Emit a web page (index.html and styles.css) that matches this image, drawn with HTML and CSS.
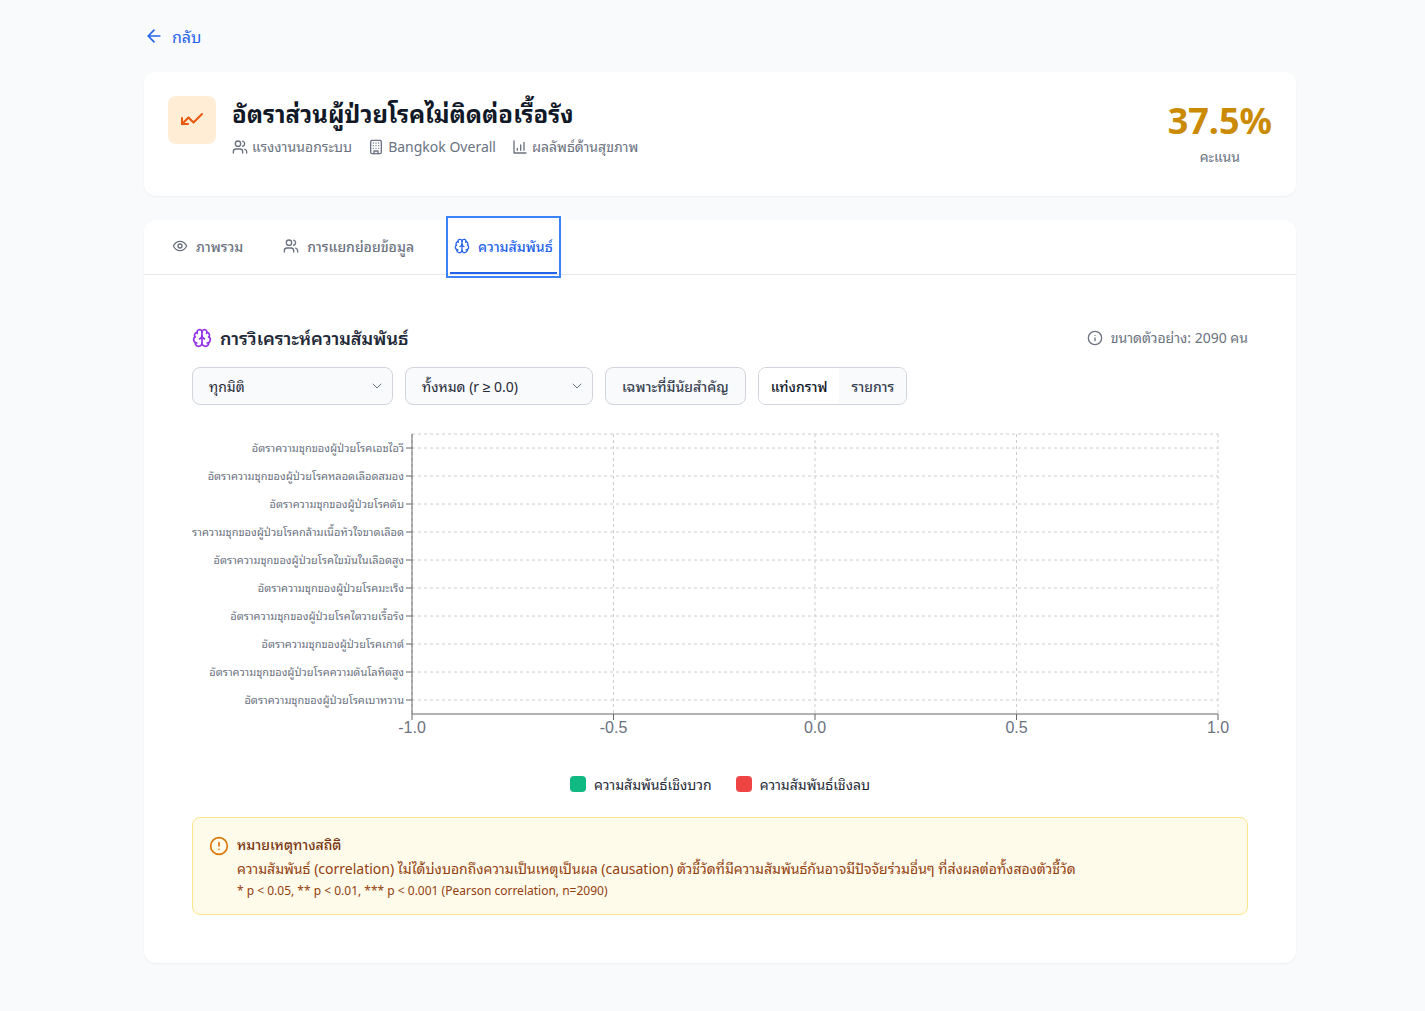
FILE: index.html
```html
<!DOCTYPE html>
<html lang="th">
<head>
<meta charset="utf-8">
<title>อัตราส่วนผู้ป่วยโรคไม่ติดต่อเรื้อรัง</title>
<link rel="stylesheet" href="styles.css">
</head>
<body>
<main class="page">
  <a class="back" href="#">
    <svg class="ic20" viewBox="0 0 24 24"><path d="M19 12H5M12 19l-7-7 7-7"/></svg>
    <span>กลับ</span>
  </a>

  <section class="card head">
    <div class="head-left">
      <div class="head-icon">
        <svg viewBox="0 0 24 24"><path d="M22 6l-8.5 8.5-5-5L2 16"/><path d="M2 10v6h6"/></svg>
      </div>
      <div>
        <h1>อัตราส่วนผู้ป่วยโรคไม่ติดต่อเรื้อรัง</h1>
        <div class="meta">
          <span class="meta-item"><svg class="ic16" viewBox="0 0 24 24"><path d="M16 21v-2a4 4 0 0 0-4-4H6a4 4 0 0 0-4 4v2"/><circle cx="9" cy="7" r="4"/><path d="M22 21v-2a4 4 0 0 0-3-3.87M16 3.13a4 4 0 0 1 0 7.75"/></svg>แรงงานนอกระบบ</span>
          <span class="meta-item"><svg class="ic16" viewBox="0 0 24 24"><rect x="4" y="2" width="16" height="20" rx="2"/><path d="M9 22v-4h6v4M8 6h.01M16 6h.01M12 6h.01M12 10h.01M12 14h.01M16 10h.01M16 14h.01M8 10h.01M8 14h.01"/></svg>Bangkok Overall</span>
          <span class="meta-item"><svg class="ic16" viewBox="0 0 24 24"><path d="M3 3v18h18M13 17V9M18 17V5M8 17v-3"/></svg>ผลลัพธ์ด้านสุขภาพ</span>
        </div>
      </div>
    </div>
    <div class="score">
      <div class="score-num">37.5%</div>
      <div class="score-label">คะแนน</div>
    </div>
  </section>

  <section class="card main">
    <nav class="tabs">
      <a class="tab" href="#"><svg class="ic16" viewBox="0 0 24 24"><path d="M2 12s3.6-7 10-7 10 7 10 7-3.6 7-10 7-10-7-10-7z"/><circle cx="12" cy="12" r="3"/></svg>ภาพรวม</a>
      <a class="tab" href="#"><svg class="ic16" viewBox="0 0 24 24"><path d="M16 21v-2a4 4 0 0 0-4-4H6a4 4 0 0 0-4 4v2"/><circle cx="9" cy="7" r="4"/><path d="M22 21v-2a4 4 0 0 0-3-3.87M16 3.13a4 4 0 0 1 0 7.75"/></svg>การแยกย่อยข้อมูล</a>
      <a class="tab active" href="#"><svg class="ic16" viewBox="0 0 24 24"><use href="#brain"/></svg>ความสัมพันธ์</a>
    </nav>

    <div class="panel">
      <div class="panel-head">
        <h2><svg class="ic20 purple" viewBox="0 0 24 24"><use href="#brain"/></svg>การวิเคราะห์ความสัมพันธ์</h2>
        <div class="sample"><svg class="ic16" viewBox="0 0 24 24"><circle cx="12" cy="12" r="10"/><path d="M12 16v-4M12 8h.01"/></svg>ขนาดตัวอย่าง: 2090 คน</div>
      </div>

      <div class="filters">
        <div class="select w-dim">ทุกมิติ<svg class="chev" viewBox="0 0 24 24"><path d="M6 9l6 6 6-6"/></svg></div>
        <div class="select w-r">ทั้งหมด (r ≥ 0.0)<svg class="chev" viewBox="0 0 24 24"><path d="M6 9l6 6 6-6"/></svg></div>
        <button class="btn">เฉพาะที่มีนัยสำคัญ</button>
        <div class="toggle"><span class="on">แท่งกราฟ</span><span class="off">รายการ</span></div>
      </div>

      <svg class="chart" width="1056" height="330" viewBox="192 424 1056 330">
        <g class="grid">
          <path d="M412 434H1218M412 448H1218M412 476H1218M412 504H1218M412 532H1218M412 560H1218M412 588H1218M412 616H1218M412 644H1218M412 672H1218M412 700H1218"/>
          <path d="M412 434V714M613.5 434V714M815 434V714M1016.5 434V714M1218 434V714"/>
        </g>
        <g class="axis">
          <path d="M412 434V714M412 714H1218"/>
          <path d="M406 448H412M406 476H412M406 504H412M406 532H412M406 560H412M406 588H412M406 616H412M406 644H412M406 672H412M406 700H412"/>
          <path d="M412 714V720M613.5 714V720M815 714V720M1016.5 714V720M1218 714V720"/>
        </g>
        <g class="ylab">
          <text x="404" y="452">อัตราความชุกของผู้ป่วยโรคเอชไอวี</text>
          <text x="404" y="480">อัตราความชุกของผู้ป่วยโรคหลอดเลือดสมอง</text>
          <text x="404" y="508">อัตราความชุกของผู้ป่วยโรคตับ</text>
          <text x="404" y="536">อัตราความชุกของผู้ป่วยโรคกล้ามเนื้อหัวใจขาดเลือด</text>
          <text x="404" y="564">อัตราความชุกของผู้ป่วยโรคไขมันในเลือดสูง</text>
          <text x="404" y="592">อัตราความชุกของผู้ป่วยโรคมะเร็ง</text>
          <text x="404" y="620">อัตราความชุกของผู้ป่วยโรคไตวายเรื้อรัง</text>
          <text x="404" y="648">อัตราความชุกของผู้ป่วยโรคเกาต์</text>
          <text x="404" y="676">อัตราความชุกของผู้ป่วยโรคความดันโลหิตสูง</text>
          <text x="404" y="704">อัตราความชุกของผู้ป่วยโรคเบาหวาน</text>
        </g>
        <g class="xlab">
          <text x="412" y="733">-1.0</text>
          <text x="613.5" y="733">-0.5</text>
          <text x="815" y="733">0.0</text>
          <text x="1016.5" y="733">0.5</text>
          <text x="1218" y="733">1.0</text>
        </g>
      </svg>

      <div class="legend">
        <span class="leg"><i class="sw green"></i>ความสัมพันธ์เชิงบวก</span>
        <span class="leg"><i class="sw red"></i>ความสัมพันธ์เชิงลบ</span>
      </div>

      <div class="note">
        <svg class="note-ic" viewBox="0 0 24 24"><circle cx="12" cy="12" r="10"/><path d="M12 8v4M12 16h.01"/></svg>
        <div>
          <div class="note-title">หมายเหตุทางสถิติ</div>
          <div class="note-body">ความสัมพันธ์ (correlation) ไม่ได้บ่งบอกถึงความเป็นเหตุเป็นผล (causation) ตัวชี้วัดที่มีความสัมพันธ์กันอาจมีปัจจัยร่วมอื่นๆ ที่ส่งผลต่อทั้งสองตัวชี้วัด</div>
          <div class="note-foot">* p &lt; 0.05, ** p &lt; 0.01, *** p &lt; 0.001 (Pearson correlation, n=2090)</div>
        </div>
      </div>
    </div>
  </section>
</main>

<svg class="defs" width="0" height="0">
  <symbol id="brain" viewBox="0 0 24 24">
    <path d="M12 18V5"/>
    <path d="M15 13a4.17 4.17 0 0 1-3-4 4.17 4.17 0 0 1-3 4"/>
    <path d="M17.598 6.5A3 3 0 1 0 12 5a3 3 0 1 0-5.598 1.5"/>
    <path d="M17.997 5.125a4 4 0 0 1 2.526 5.77"/>
    <path d="M18 18a4 4 0 0 0 2-7.464"/>
    <path d="M19.967 17.483A4 4 0 1 1 12 18a4 4 0 1 1-7.967-.517"/>
    <path d="M6 18a4 4 0 0 1-2-7.464"/>
    <path d="M6.003 5.125a4 4 0 0 0-2.526 5.77"/>
  </symbol>
</svg>
</body>
</html>
```

FILE: styles.css
```css
* { box-sizing: border-box; }
html, body { margin: 0; padding: 0; }
body {
  background: #f9fafb;
  font-family: "Noto Sans", "Noto Sans Thai Looped", sans-serif;
  color: #111827;
  font-size: 14px;
}
svg { fill: none; stroke: currentColor; stroke-width: 2; stroke-linecap: round; stroke-linejoin: round; flex: none; }
.defs { position: absolute; }
.ic16 { width: 16px; height: 16px; }
.ic20 { width: 20px; height: 20px; }
.page { width: 1152px; margin: 0 0 0 144px; padding: 24px 0 48px; }
.back { display: flex; width: fit-content; align-items: center; gap: 8px; height: 24px; color: #2563eb; text-decoration: none; font-size: 16px; }
.card { background: #fff; border-radius: 12px; box-shadow: 0 1px 2px rgba(0,0,0,.05); }
.head { margin-top: 24px; height: 124px; padding: 24px; display: flex; justify-content: space-between; align-items: flex-start; }
.head-left { display: flex; gap: 16px; }
.head-icon { width: 48px; height: 48px; border-radius: 8px; background: #ffedd5; color: #ea580c; display: flex; align-items: center; justify-content: center; }
.head-icon svg { width: 24px; height: 24px; }
h1 { margin: 0; font-size: 24px; line-height: 36px; font-weight: 700; }
.meta { display: flex; gap: 16px; margin-top: 5px; color: #6b7280; font-size: 14px; line-height: 20px; }
.meta-item { display: flex; align-items: center; gap: 4px; }
.score { text-align: right; }
.score-num { font-size: 36px; line-height: 40px; font-weight: 700; color: #ca8a04; text-align: center; margin-top: 5px; }
.score-label { font-size: 14px; line-height: 20px; color: #6b7280; text-align: center; margin-top: 6px; }
.main { margin-top: 24px; height: 743px; }
.tabs { display: flex; gap: 32px; height: 55px; padding: 0 24px; border-bottom: 1px solid #e5e7eb; }
.tab { display: flex; align-items: center; gap: 8px; height: 54px; padding: 2px 4px 0; font-size: 14px; line-height: 20px; font-weight: 500; color: #6b7280; text-decoration: none; border-bottom: 2px solid transparent; }
.tab svg { margin-bottom: 2px; }
.tab.active { color: #2563eb; border-bottom-color: #2563eb; outline: 2px solid #3b82f6; outline-offset: 2px; }
.panel { padding: 48px; }
.panel-head { display: flex; justify-content: space-between; align-items: center; height: 28px; padding-top: 2px; }
h2 { margin: 0; display: flex; align-items: center; gap: 8px; font-size: 18px; line-height: 28px; font-weight: 600; color: #1f2937; }
.purple { color: #9333ea; }
.sample { display: flex; align-items: center; gap: 8px; font-size: 14px; line-height: 20px; color: #6b7280; }
.filters { display: flex; gap: 12px; margin-top: 16px; height: 38px; }
.select { height: 38px; border: 1px solid #d1d5db; border-radius: 8px; background: #f9fafb; display: flex; align-items: center; justify-content: space-between; padding: 2px 7px 0 16px; font-size: 14px; line-height: 20px; color: #1f2937; }
.w-dim { width: 201px; }
.w-r { width: 188px; }
.chev { width: 16px; height: 16px; margin-bottom: 2px; color: #6b7280; stroke-width: 1.5; }
.btn { height: 38px; padding: 2px 16px 0; border: 1px solid #d1d5db; border-radius: 8px; background: #f9fafb; font: inherit; font-weight: 500; line-height: 20px; color: #374151; }
.toggle { display: flex; height: 38px; border: 1px solid #d1d5db; border-radius: 8px; overflow: hidden; font-size: 14px; line-height: 20px; font-weight: 500; }
.toggle span { display: flex; align-items: center; padding: 2px 12px 0; }
.on { background: #fff; color: #111827; }
.off { background: #f9fafb; color: #374151; }
.chart { display: block; margin-top: 19px; overflow: hidden; stroke: none; }
.grid path { stroke: #ccc; stroke-width: 1; stroke-dasharray: 3 3; stroke-linecap: butt; }
.axis path { stroke: #666; stroke-width: 1; stroke-linecap: butt; }
.ylab text { fill: #6b7280; font-size: 11px; text-anchor: end; stroke: none; }
.xlab text { fill: #6b7280; font-size: 16px; text-anchor: middle; font-family: "Liberation Sans", sans-serif; stroke: none; }
.legend { display: flex; justify-content: center; gap: 24px; margin-top: 19px; height: 24px; align-items: center; }
.leg { display: flex; align-items: center; gap: 8px; font-size: 14px; line-height: 20px; color: #1f2937; }
.sw { width: 16px; height: 16px; margin-bottom: 2px; border-radius: 4px; display: block; }
.green { background: #10b981; }
.red { background: #ef4444; }
.note { margin-top: 20px; height: 98px; border: 1px solid #fde68a; border-radius: 8px; background: #fffbeb; padding: 16px; display: flex; gap: 8px; color: #92400e; }
.note-ic { width: 20px; height: 20px; color: #d97706; margin-top: 2px; }
.note-title { font-size: 14px; line-height: 22px; font-weight: 500; color: #78350f; }
.note-body { margin-top: 1px; font-size: 14px; line-height: 24px; color: #92400e; }
.note-foot { font-size: 12px; line-height: 20px; color: #92400e; }
```
